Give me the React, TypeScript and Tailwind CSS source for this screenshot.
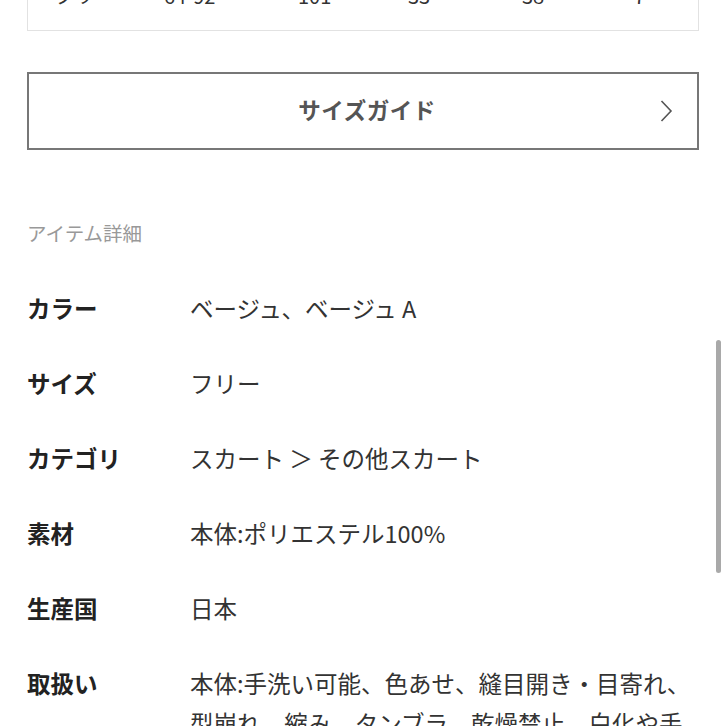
import React from "react";

const font = { fontFamily: '"Noto Sans CJK JP", "Noto Sans", sans-serif' };

const rows: { label: string; value: React.ReactNode }[] = [
  { label: "カラー", value: "ベージュ、ベージュ A" },
  { label: "サイズ", value: "フリー" },
  { label: "カテゴリ", value: "スカート ＞ その他スカート" },
  { label: "素材", value: "本体:ポリエステル100%" },
  { label: "生産国", value: "日本" },
  {
    label: "取扱い",
    value: (
      <>
        本体:手洗い可能、色あせ、縫目開き・目寄れ、
        <br />
        型崩れ、縮み、タンブラ、乾燥禁止、白化や手
        <br />
        触りの変化が起こる場合があります。
      </>
    ),
  },
];

export default function App() {
  return (
    <div className="relative h-[726px] w-[726px] overflow-hidden bg-white" style={font}>
      <div className="px-[27px]">
        {/* top table (cut off) */}
        <div className="h-[31px] w-[672px] overflow-hidden border-x border-b border-[#e2e2e2]">
          <div className="-mt-[16px] flex text-[20px] leading-[24px] text-[#333]">
            <div className="w-[86px] pl-[26px]">フリー</div>
            <div className="w-[130px] pl-[50px]">64-92</div>
            <div className="w-[120px] pl-[54px]">101</div>
            <div className="w-[112px] pl-[44px]">33</div>
            <div className="w-[114px] pl-[46px]">38</div>
            <div className="pl-[44px]">7</div>
          </div>
        </div>

        {/* size guide button */}
        <div className="relative mt-[41px] flex h-[78px] w-[672px] items-center justify-center border-2 border-[#777]">
          <span className="-mt-[3px] ml-[8px] text-[22.5px] font-bold tracking-[0.5px] text-[#555]">サイズガイド</span>
          <svg
            className="absolute right-[24px] top-1/2 -translate-y-1/2"
            width="13"
            height="23"
            viewBox="0 0 13 23"
            fill="none"
          >
            <path d="M1.5 1.5 L11 11.5 L1.5 21.5" stroke="#555" strokeWidth="1.6" />
          </svg>
        </div>

        {/* item detail header */}
        <div className="mt-[69px] text-[19.5px] leading-[28px] text-[#999]">アイテム詳細</div>

        {/* rows */}
        <div className="mt-[41px] flex flex-col gap-[35px]">
          {rows.map((r) => (
            <div key={r.label} className="flex text-[23.5px] leading-[40px]">
              <div className="w-[163px] shrink-0 font-bold text-[#222]">{r.label}</div>
              <div className="flex-1 text-[#333] leading-[40px]">{r.value}</div>
            </div>
          ))}
        </div>
      </div>

      {/* scrollbar */}
      <div className="absolute left-[716px] top-[340px] h-[233px] w-[5px] rounded-full bg-[#a9a9a9]" />
    </div>
  );
}
